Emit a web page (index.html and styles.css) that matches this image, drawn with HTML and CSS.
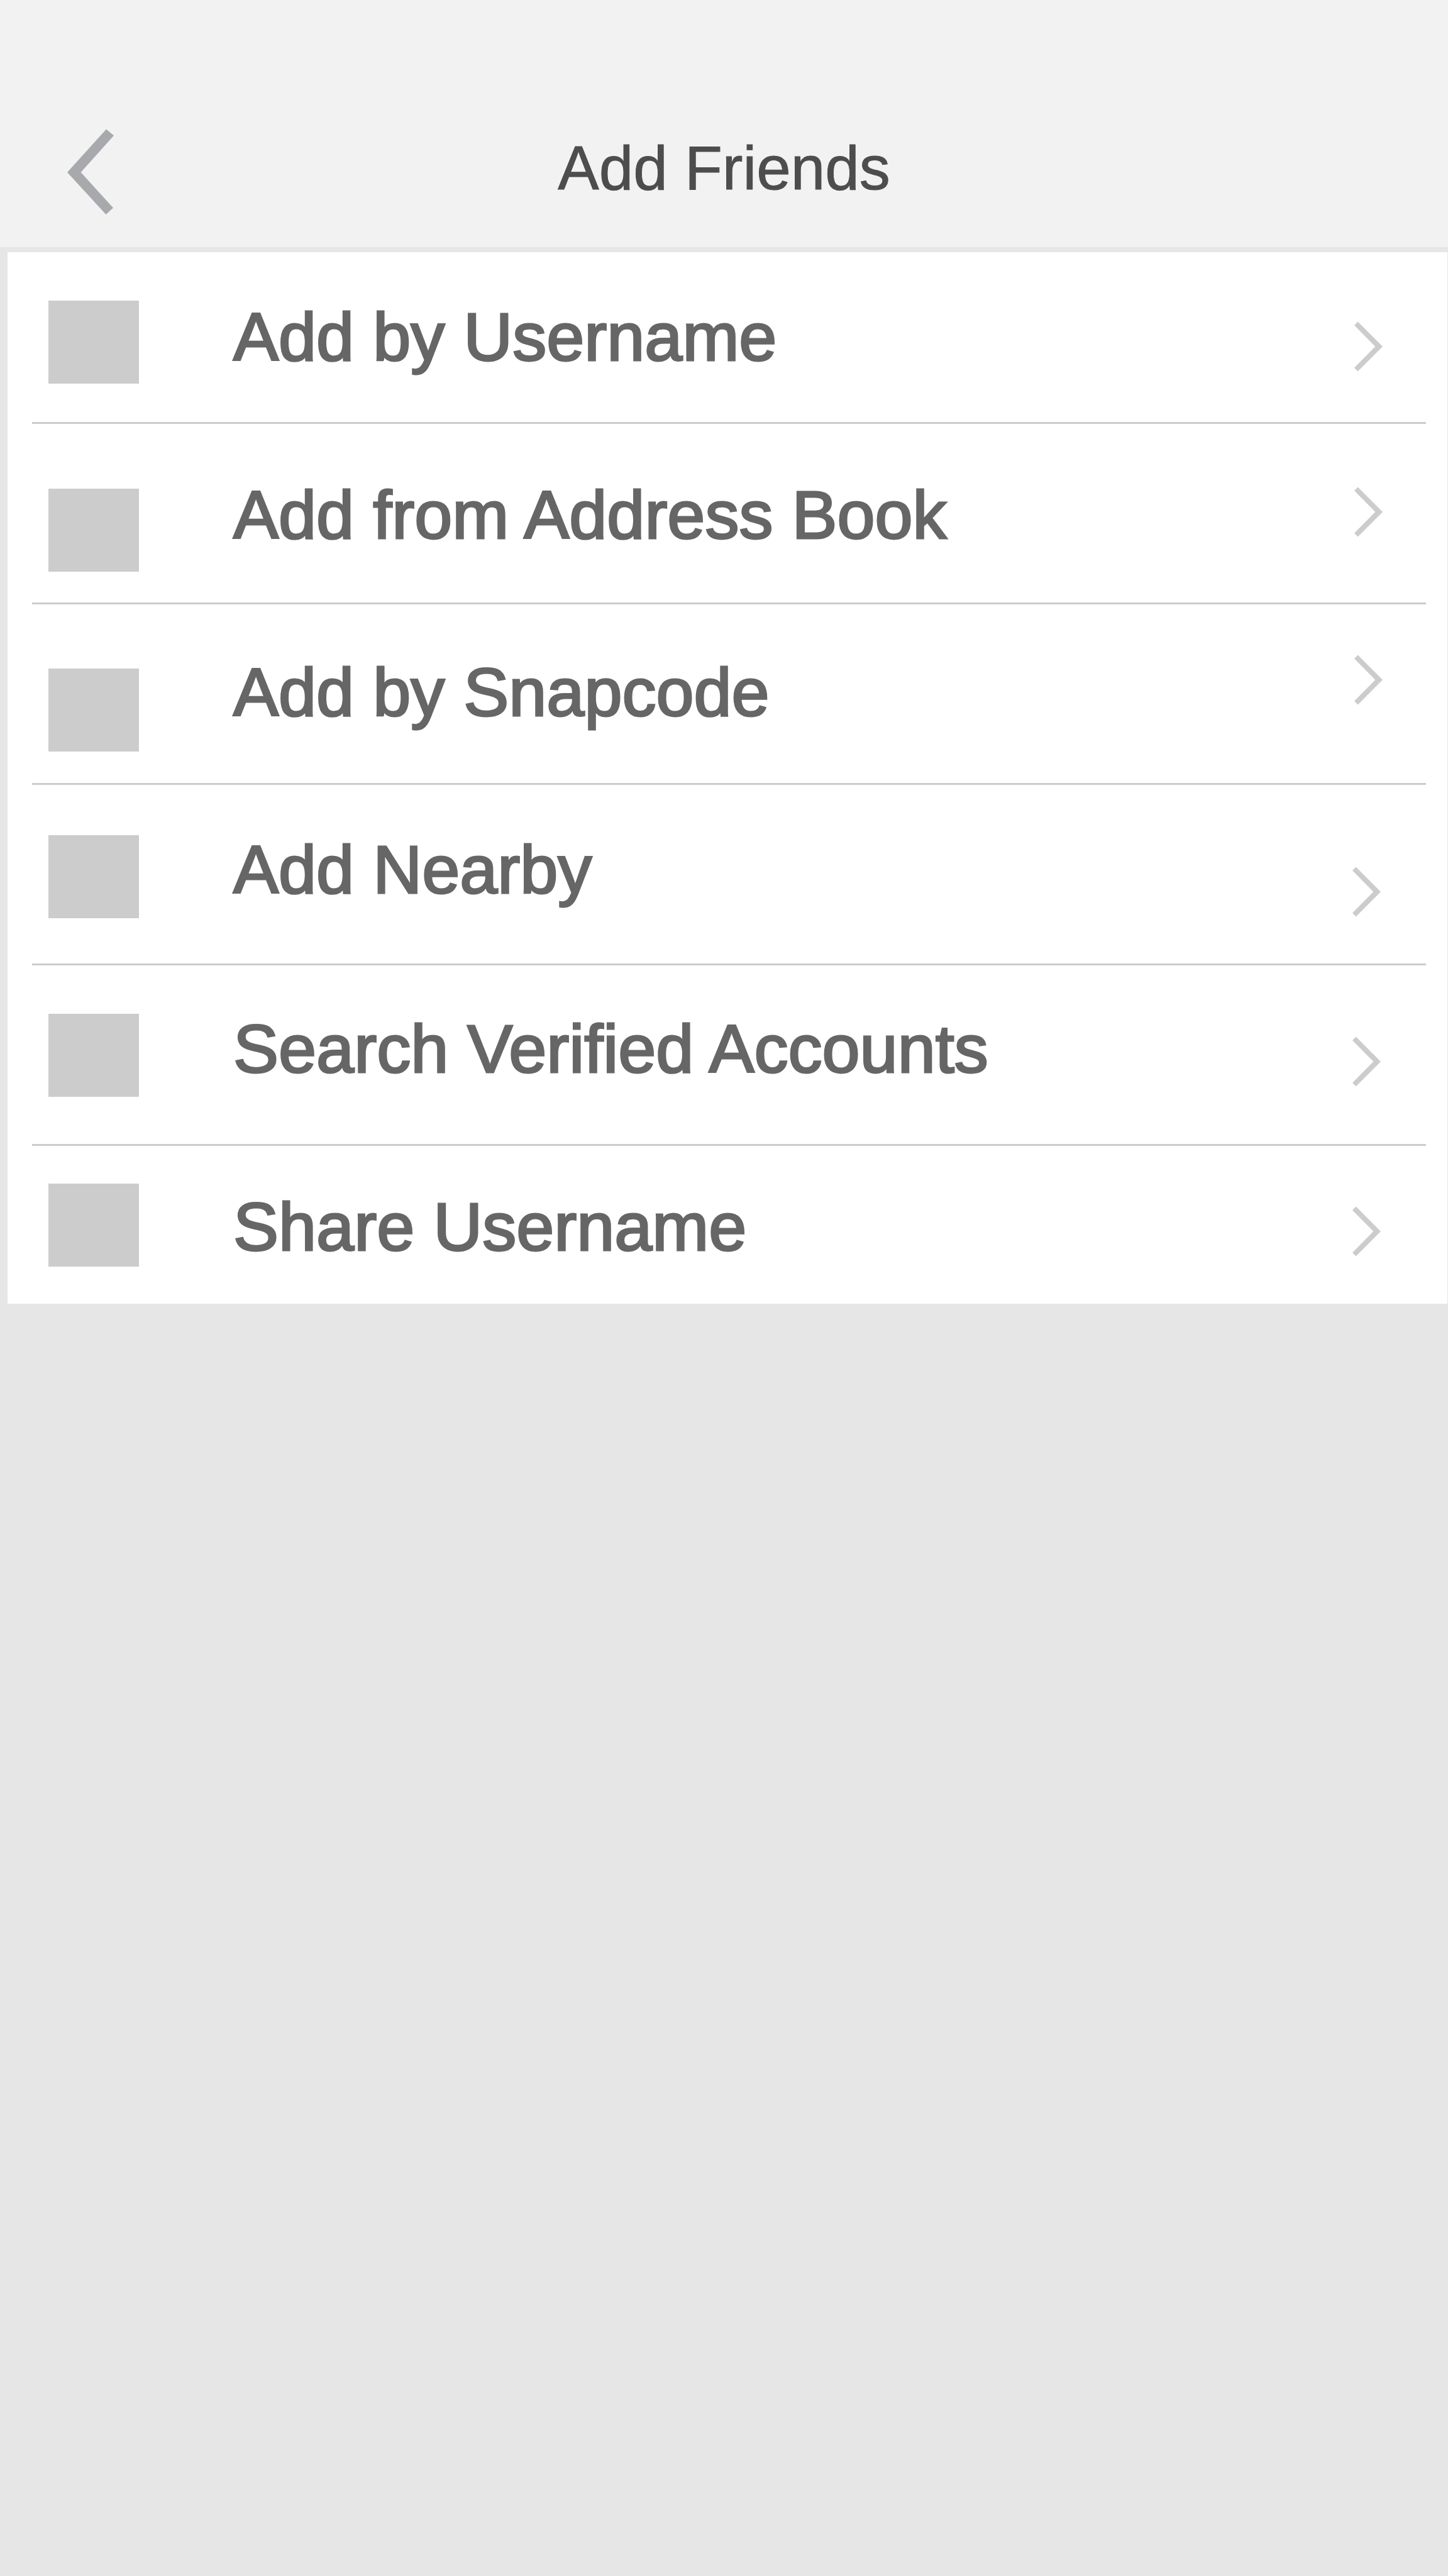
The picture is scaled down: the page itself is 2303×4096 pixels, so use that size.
FILE: index.html
```html
<!DOCTYPE html>
<html lang="en">
<head>
  <meta charset="utf-8">
  <meta name="viewport" content="width=device-width, initial-scale=1">
  <title>Add Friends</title>
  <link rel="stylesheet" href="styles.css">
</head>
<body>
  <header class="topbar">
    <button class="back" type="button" aria-label="Back">
      <svg class="back-icon" viewBox="0 0 74 136" aria-hidden="true"><path d="M62 0.5 74 10.5 21.6 69 73 125.5 61.5 136 0 69Z"/></svg>
    </button>
    <h1 class="title">Add Friends</h1>
  </header>
  <main>
    <ul class="menu">
      <li class="item">
        <a class="link" href="#username">
          <span class="thumb"></span>
          <span class="label">Add by Username</span>
          <svg class="chevron" viewBox="0 0 45 80" aria-hidden="true"><path d="M5.6 0.5 45 40 5.6 79.5 0 73.8 33.3 40 0 6.2Z"/></svg>
        </a>
      </li>
      <li class="item">
        <a class="link" href="#address-book">
          <span class="thumb"></span>
          <span class="label">Add from Address Book</span>
          <svg class="chevron" viewBox="0 0 45 80" aria-hidden="true"><path d="M5.6 0.5 45 40 5.6 79.5 0 73.8 33.3 40 0 6.2Z"/></svg>
        </a>
      </li>
      <li class="item">
        <a class="link" href="#snapcode">
          <span class="thumb"></span>
          <span class="label">Add by Snapcode</span>
          <svg class="chevron" viewBox="0 0 45 80" aria-hidden="true"><path d="M5.6 0.5 45 40 5.6 79.5 0 73.8 33.3 40 0 6.2Z"/></svg>
        </a>
      </li>
      <li class="item">
        <a class="link" href="#nearby">
          <span class="thumb"></span>
          <span class="label">Add Nearby</span>
          <svg class="chevron" viewBox="0 0 45 80" aria-hidden="true"><path d="M5.6 0.5 45 40 5.6 79.5 0 73.8 33.3 40 0 6.2Z"/></svg>
        </a>
      </li>
      <li class="item">
        <a class="link" href="#verified">
          <span class="thumb"></span>
          <span class="label">Search Verified Accounts</span>
          <svg class="chevron" viewBox="0 0 45 80" aria-hidden="true"><path d="M5.6 0.5 45 40 5.6 79.5 0 73.8 33.3 40 0 6.2Z"/></svg>
        </a>
      </li>
      <li class="item">
        <a class="link" href="#share">
          <span class="thumb"></span>
          <span class="label">Share Username</span>
          <svg class="chevron" viewBox="0 0 45 80" aria-hidden="true"><path d="M5.6 0.5 45 40 5.6 79.5 0 73.8 33.3 40 0 6.2Z"/></svg>
        </a>
      </li>
    </ul>
  </main>
</body>
</html>
```
FILE: styles.css
```css
* {
  box-sizing: border-box;
}

body {
  margin: 0;
  min-height: 100vh;
  background: #e6e6e6;
  font-family: "Liberation Sans", Arial, sans-serif;
}

/* Header */
.topbar {
  display: grid;
  grid-template-columns: 1fr auto 1fr;
  align-items: start;
  padding: 205px 0 52px;
  background: #f2f2f2;
  border-bottom: 8px solid #e6e6e6;
}

.back {
  justify-self: start;
  margin: 0 0 0 107px;
  padding: 0;
  border: 0;
  background: none;
  cursor: pointer;
}

.back-icon {
  display: block;
  width: 74px;
  height: 136px;
  fill: #a7a9ac;
}

.title {
  margin: 6px 0 0;
  font-size: 98px;
  line-height: 112px;
  font-weight: 400;
  color: #4d4d4d;
  -webkit-text-stroke: 1px #4d4d4d;
}

/* Menu */
.menu {
  list-style: none;
  margin: 0 1px 0 12px;
  padding: 0 34px 0 39px;
  background: #fff;
}

.item {
  --thumb-top: 77px;
  --label-top: 72px;
  --chevron-top: 110px;
  min-height: 287px;
  border-bottom: 3px solid #ccc;
}

.link {
  display: flex;
  align-items: flex-start;
  padding: 0 69px 0 26px;
  color: #666;
  text-decoration: none;
}

.thumb {
  flex: none;
  width: 144px;
  height: 132px;
  margin-top: var(--thumb-top);
  background: #ccc;
}

/* The outline gives the regular face a medium weight */
.label {
  flex: 1;
  margin: var(--label-top) 0 0 150px;
  font-size: 108px;
  line-height: 126px;
  -webkit-text-stroke: 3px #666;
}

.chevron {
  flex: none;
  width: 45px;
  height: 80px;
  margin-top: var(--chevron-top);
  fill: #ccc;
}

.item:nth-child(1) {
  min-height: 273px;
}

.item:nth-child(2) {
  --thumb-top: 103px;
  --label-top: 82px;
  --chevron-top: 100px;
}

.item:nth-child(3) {
  --thumb-top: 102px;
  --label-top: 77px;
  --chevron-top: 80px;
}

.item:nth-child(4) {
  --thumb-top: 80px;
  --chevron-top: 130px;
}

.item:nth-child(5) {
  --label-top: 70px;
  --chevron-top: 113px;
}

.item:nth-child(6) {
  --thumb-top: 60px;
  --label-top: 66px;
  --chevron-top: 96px;
  min-height: 251px;
  border-bottom: 0;
}

.item:nth-child(n + 4) .link {
  padding-right: 72px;
}
```
